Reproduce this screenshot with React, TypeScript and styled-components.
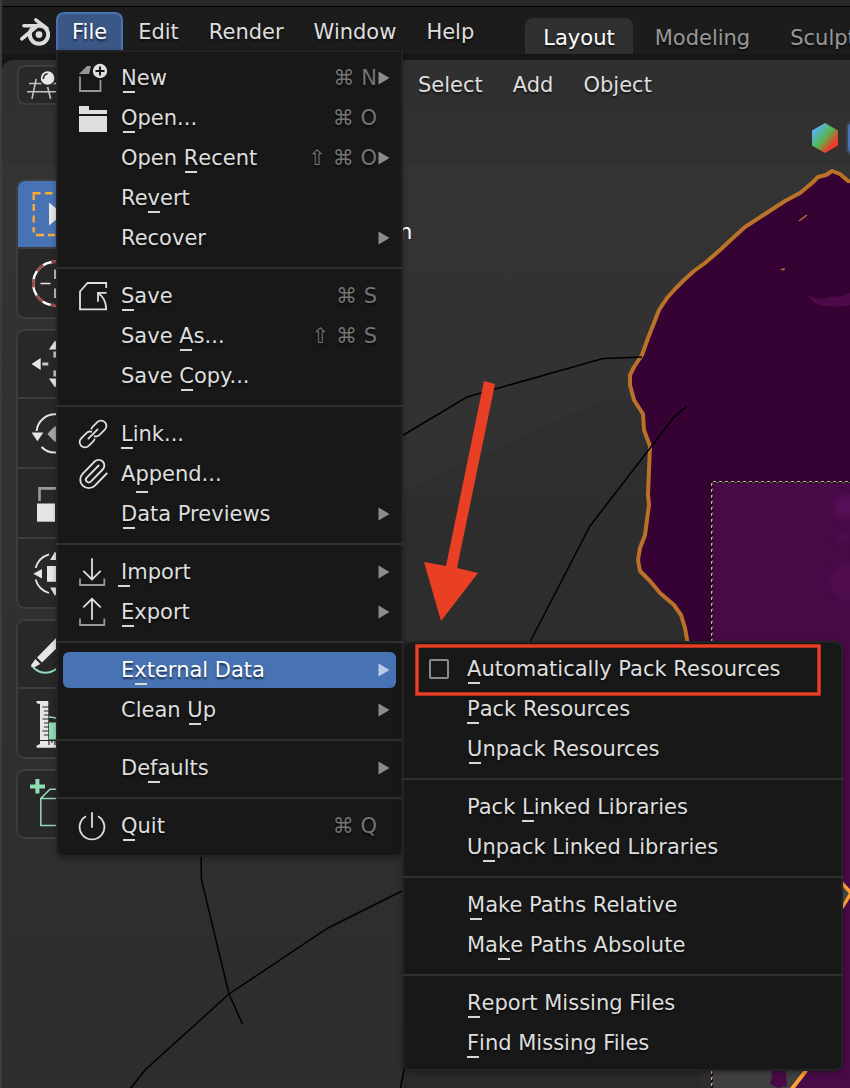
import React from "react";
import styled, { createGlobalStyle, css } from "styled-components";
import { Paperclip } from "lucide-react";

const GlobalStyle = createGlobalStyle`
  *, *::before, *::after { box-sizing: border-box; }
  body {
    margin: 0;
    background: #161616;
    color: #dedede;
    font: 21px/24px "DejaVu Sans", sans-serif;
    overflow-x: hidden;
  }
  button {
    font: inherit;
    color: inherit;
    background: none;
    border: 0;
    margin: 0;
    padding: 0;
    text-shadow: inherit;
  }
  ul { list-style: none; margin: 0; padding: 0; }
  svg { display: block; }
`;

/* ---------- window frame ---------- */

const AppFrame = styled.div`
  position: relative;
  display: flex;
  flex-direction: column;
  min-height: 100vh;
  overflow: hidden;
  border-left: 2px solid #3c3c3c;
  text-shadow: 0 2px 2px rgba(0, 0, 0, 0.6);
`;

const TitleStrip = styled.div`
  height: 7px;
  background: #282828;
  border-bottom: 1px solid #000;
`;

const TopBar = styled.header`
  display: flex;
  height: 47px;
  background: #1c1c1c;
`;

const LogoButton = styled.button`
  display: flex;
  align-items: flex-start;
  width: 54px;
  padding: 9px 0 0 16px;
  flex: none;
`;

const MenuBar = styled.nav`
  display: flex;
  padding-top: 5px;
  & > button {
    padding-top: 2px;
  }
`;

const MenuAnchor = styled.div`
  position: relative;
`;

const MenuTitle = styled.button<{ $open?: boolean }>`
  height: 38px;
  padding: 0 15px;
  border: 0 solid #4772b3;
  ${(p) =>
    p.$open &&
    css`
      padding: 0 14px;
      border-width: 2px 2px 0;
      border-radius: 8px 8px 0 0;
      background: #3b5786;
      color: #fff;
    `}
`;

const WorkspaceTabs = styled.nav`
  display: flex;
  align-items: flex-end;
  gap: 4px;
  margin-left: 36px;
`;

const WorkspaceTab = styled.button<{ $active?: boolean }>`
  height: 36px;
  padding: 4px 18px 0;
  border-radius: 8px 8px 0 0;
  background: ${(p) => (p.$active ? "#303030" : "transparent")};
  color: ${(p) => (p.$active ? "#fff" : "#989898")};
`;

/* ---------- 3D view ---------- */

const Viewport = styled.main`
  position: relative;
  flex: 1;
  margin-top: 6px;
  border-radius: 12px 0 0 0;
  overflow: hidden;
  background: linear-gradient(#343434, #2d2d2d);
`;

const SceneDrawing = styled.svg`
  position: absolute;
  inset: 0;
  width: 100%;
  height: 100%;
  text-shadow: none;
`;

const ViewHeader = styled.div`
  position: relative;
  display: grid;
  grid-template-columns: 386px 1fr;
  align-items: center;
  height: 50px;
  padding-left: 15px;
  background: #303030;
`;

const EditorTypeButton = styled.button`
  width: 66px;
  height: 40px;
  border: 2px solid #3d3d3d;
  border-radius: 8px;
  background: #282828;
`;

const ViewMenus = styled.nav`
  display: flex;
`;

const ToolHeader = styled.div`
  position: relative;
  display: flex;
  justify-content: flex-end;
  align-items: center;
  gap: 7px;
  height: 53px;
  padding-top: 2px;
  background: #313131;
`;

const ShadingButton = styled.button`
  width: 24px;
  height: 36px;
  margin-right: -20px;
  border: 2px solid #3d4656;
  border-radius: 8px;
  background: #4772b3;
`;

const ToolShelf = styled.aside`
  position: relative;
  display: flex;
  flex-direction: column;
  gap: 10px;
  width: 70px;
  margin: 16px 0 0 14px;
`;

const ToolGroup = styled.div`
  overflow: hidden;
  border: 2px solid #3d3d3d;
  border-radius: 9px;
  background: #282828;
`;

const ToolButton = styled.button<{ $active?: boolean }>`
  display: block;
  width: 100%;
  height: 70px;
  border-top: 2px solid #3d3d3d;
  background: ${(p) => (p.$active ? "#4772b3" : "#282828")};
  &:first-child {
    height: 66px;
    border-top: 0;
  }
`;

/* ---------- pop-up menus ---------- */

const MenuPanel = styled.ul<{ $sub?: boolean }>`
  position: absolute;
  z-index: 2;
  top: ${(p) => (p.$sub ? "-8px" : "38px")};
  left: ${(p) => (p.$sub ? "344px" : "0")};
  width: ${(p) => (p.$sub ? "441px" : "347px")};
  padding: 5px 0 ${(p) => (p.$sub ? "7px" : "10px")};
  border: 2px solid #232323;
  border-radius: ${(p) => (p.$sub ? "8px" : "0 0 8px 8px")};
  background: #181818;
  color: #dedede;
  box-shadow: 0 2px 5px rgba(0, 0, 0, 0.3);
`;

const MenuRow = styled.li`
  position: relative;
  padding: 3px 5px 1px;
`;

const MenuDivider = styled.li`
  height: 2px;
  margin: 10px -2px 6px;
  background: #303030;
`;

const rowFace = css<{ $active?: boolean }>`
  display: grid;
  grid-template-columns: 30px 1fr auto 12px;
  align-items: center;
  width: 100%;
  height: 36px;
  padding: 0 6px 0 15px;
  border-radius: 6px;
  text-align: left;
  white-space: nowrap;
  background: ${(p) => (p.$active ? "#4772b3" : "transparent")};
  color: ${(p) => (p.$active ? "#fff" : "inherit")};
`;

const RowButton = styled.button<{ $active?: boolean }>`
  ${rowFace}
`;

const RowCheck = styled.label<{ $active?: boolean }>`
  ${rowFace}
`;

const RowText = styled.span`
  padding-left: 13px;
`;

const Mnemonic = styled.span<{ $low?: boolean }>`
  position: relative;
  &::after {
    content: "";
    position: absolute;
    left: 50%;
    bottom: ${(p) => (p.$low ? "-7px" : "-3px")};
    width: 12px;
    height: 2px;
    margin-left: -6px;
    background: #d8d8d8;
  }
`;

const Shortcut = styled.span`
  padding-right: 1px;
  color: #747474;
`;

const CheckBox = styled.input`
  appearance: none;
  width: 20px;
  height: 20px;
  margin: 0 5px;
  border: 2px solid #8a8a8a;
  border-radius: 2px;
`;

const Annotation = styled.svg`
  position: absolute;
  z-index: 3;
  top: 0;
  left: 0;
  width: 100%;
  height: 100%;
  pointer-events: none;
`;

/* ---------- icons ---------- */

const BlenderLogo = () => (
  <svg width="32" height="32" viewBox="18 16 32 32" fill="none" stroke="#dcdcdc" strokeLinecap="round" strokeLinejoin="round">
    <circle cx="39" cy="34.6" r="9.2" strokeWidth="4" />
    <circle cx="39" cy="34.6" r="3.4" fill="#dcdcdc" stroke="none" />
    <path d="M35.8 19.8L47 28.4" strokeWidth="3.4" />
    <path d="M24 25.8H40" strokeWidth="3.6" />
    <path d="M21.8 38.8L36 27" strokeWidth="3.6" />
  </svg>
);

const MenuIcon = ({ name }: { name?: string }) => {
  const base = { width: 30, height: 32, viewBox: "0 0 30 32", fill: "none", stroke: "#dedede", strokeWidth: 1.8 };
  switch (name) {
    case "new":
      return (
        <svg {...base}>
          <path d="M2 14.5V29H22.5V18" stroke="#979797" />
          <path d="M1 12L9 4H13L11 12Z" fill="#979797" stroke="none" />
          <circle cx="22" cy="9" r="7.2" fill="#dedede" stroke="none" />
          <path d="M22 4.5V13.5M17.5 9H26.5" stroke="#181818" strokeWidth="2" />
        </svg>
      );
    case "open":
      return (
        <svg {...base}>
          <path d="M1 4H11V8H29V12H1ZM1 14H29V30H1Z" fill="#dedede" stroke="none" />
        </svg>
      );
    case "save":
      return (
        <svg {...base}>
          <path d="M28.2 8V3H9.5L2 11.5V29.3H28.2C28.2 22 26 17 20 13" />
          <path d="M28.6 12.8H20V21.8" />
        </svg>
      );
    case "link":
      return (
        <svg {...base}>
          <g transform="translate(15 16) rotate(-45)" strokeLinecap="round">
            <path d="M-6.5 0H6.5" />
            <path d="M2.6 -4.8Q3.6 -5.3 5 -5.3H11.4A5.3 5.3 0 0 1 11.4 5.3H4Q1 5.3 -0.4 2.8" />
            <path d="M-2.6 4.8Q-3.6 5.3 -5 5.3H-11.4A5.3 5.3 0 0 1 -11.4 -5.3H-4Q-1 -5.3 0.4 -2.8" />
          </g>
        </svg>
      );
    case "append":
      return <Paperclip size={34} strokeWidth={1.35} color="#dedede" style={{ marginLeft: -2 }} />;
    case "import":
      return (
        <svg {...base}>
          <path d="M2 22.5V29H26.3V22.5" stroke="#979797" />
          <path d="M14 2.3V22.5M5.3 14.8L14 23.4L22.7 14.8" />
        </svg>
      );
    case "export":
      return (
        <svg {...base}>
          <path d="M2 22.5V29H26.3V22.5" stroke="#979797" />
          <path d="M14 23.7V3.5M5.3 11.4L14 2.8L22.7 11.4" />
        </svg>
      );
    case "quit":
      return (
        <svg {...base}>
          <path d="M8 6.2A12.4 12.4 0 1 0 20 6.2M14 2.3V17.7" />
        </svg>
      );
    default:
      return <span />;
  }
};

const SubmenuArrow = ({ active }: { active?: boolean }) => (
  <svg width="12" height="14" viewBox="0 0 12 14">
    <path d="M0.5 0.5L11.5 7L0.5 13.5Z" fill={active ? "#b9cbe8" : "#8c8c8c"} />
  </svg>
);

const white = "#e6e6e6";
const mint = "#8fdcb4";

const toolDrawings: Record<string, React.ReactNode> = {
  "Select Box": (
    <>
      <path d="M15.7 19V12.2H22.5M27 12.2H34.5M39 12.2H46M15.7 23V30M15.7 34.5V41.5M15.7 46V51.5M18 54H26M30 54H37M41 54H48" stroke="#f9aa37" strokeWidth="2.4" />
      <path d="M31 21.5L45 33L31 44.5Z" fill={white} />
    </>
  ),
  Cursor: (
    <>
      <circle cx="37" cy="33.5" r="21.8" stroke="#fff" strokeWidth="2.4" />
      <circle cx="37" cy="33.5" r="21.8" stroke="#9c4444" strokeWidth="2.4" strokeDasharray="8.6 8.5" strokeDashoffset="4.3" />
      <path d="M22.5 33.5H32.5M37 19.5V29M37 38.5V48M42 33.5H52" stroke={white} strokeWidth="1.6" />
    </>
  ),
  Move: (
    <>
      <path d="M13.5 33L22.7 27V39ZM60.5 33L51.3 27V39ZM37 9.5L31 18.5H43ZM37 56.5L31 47.5H43Z" fill={white} />
      <path d="M24.3 33H30.3M43.7 33H49.7M37 20.5V26.5M37 39.5V45.5" stroke="#c8c8c8" strokeWidth="3.2" />
    </>
  ),
  Rotate: (
    <>
      <path d="M18.6 31A18.5 18.5 0 0 1 55.5 33.5M23.6 47A18.5 18.5 0 0 0 50 47" stroke={white} strokeWidth="2" />
      <path d="M13.6 32.4H25.4L19.4 41.3Z" fill={white} />
      <path d="M29.3 34L37 26L44.7 34L37 42Z" fill="#a6a6a6" />
    </>
  ),
  Scale: (
    <>
      <path d="M21.5 31V18.4H52V49H40" stroke="#9c9c9c" strokeWidth="2.6" />
      <path d="M19 33.5H37V51.7H19Z" fill={white} />
    </>
  ),
  Transform: (
    <>
      <path d="M17.6 28A20 20 0 0 1 31 14.4M17.6 39.5A20 20 0 0 0 31 53M56.4 28A20 20 0 0 0 43 14.4M56.4 39.5A20 20 0 0 1 43 53" stroke={white} strokeWidth="1.8" />
      <path d="M15.3 33.7L24 29V38.6ZM58.7 33.7L50 29V38.6ZM37 11.5L32.2 20H41.8ZM37 56L32.2 47.5H41.8ZM29 26H45V41.7H29Z" fill={white} />
    </>
  ),
  Annotate: (
    <>
      <path d="M15.2 46.6Q26.5 56.6 39 47.5" stroke={mint} strokeWidth="2" />
      <path d="M19 36.4L44 11L49.5 16.6L24 41.6ZM17.4 38L22.3 43L16 46.4Q12.6 47 13.2 44Z" fill={white} />
    </>
  ),
  Measure: (
    <>
      <path d="M31 32.5H38Q46 38 46 49.5H31Z" fill={mint} />
      <path d="M31 27Q42 26.5 51 40" stroke={mint} strokeWidth="1.6" />
      <path d="M18.6 11H30.3V50H58V57.7H18.6V55.5L22 54V14L18.6 13.2Z" fill={white} />
      <path d="M24.5 17H31M26 21H31M26 25H31M24.5 29H31M26 33H31M26 37H31M24.5 41H31M26 45H31M22 50.5H38M31 50V55M34 50V53M37 50V55" stroke="#222" strokeWidth="1.2" />
    </>
  ),
  "Add Cube": (
    <>
      <path d="M12 15.4H27M19.4 8V22.6" stroke={mint} strokeWidth="4" />
      <path d="M22.8 27.4L32 18.2H58M22.8 27.4H50V54.6H22.8Z" stroke={mint} strokeWidth="1.5" />
    </>
  ),
};

const toolGroups = [
  ["Select Box", "Cursor"],
  ["Move", "Rotate", "Scale", "Transform"],
  ["Annotate", "Measure"],
  ["Add Cube"],
];

const EditorTypeIcon = () => (
  <svg width="62" height="36" viewBox="19 67 62 36" fill="none" stroke="#c4c4c4" strokeWidth="1.6">
    <path d="M29 83.5H62M27 91.8H62M36.2 79L32 98.8M47.6 87L50.6 98.8" />
    <circle cx="47.6" cy="78" r="7.6" fill="#e8e8e8" stroke="#282828" />
    <path d="M43.4 79A4.6 4.6 0 0 1 47.6 73.8" stroke="#282828" />
  </svg>
);

const ColorHexagon = () => (
  <svg width="28" height="32" viewBox="0 0 28 32">
    <defs>
      <linearGradient id="spectrum" x1="0.1" y1="0.1" x2="0.9" y2="0.85">
        <stop offset="0.1" stopColor="#54b4e8" />
        <stop offset="0.5" stopColor="#58b64e" />
        <stop offset="0.85" stopColor="#ee3a26" />
      </linearGradient>
    </defs>
    <path d="M14 1L27 8.4V23.6L14 31L1 23.6V8.4Z" fill="url(#spectrum)" />
  </svg>
);

/* Mesh, camera frame and relationship lines of the 3D view. */
const Scene = () => (
  <SceneDrawing aria-hidden="true">
    <defs>
      <filter id="soft" x="-50%" y="-50%" width="200%" height="200%">
        <feGaussianBlur stdDeviation="4" />
      </filter>
    </defs>
    <g transform="translate(-2 -60)" fill="none">
      <path d="M403 492L600 401L640 398L700 398V1100H403Z" fill="#000" opacity="0.06" />
      <path d="M712 1060H860V1100H712Z" fill="#404040" />
      <path
        d="M862 184L856 182L848 181L840 174L832 171L826 175L818 177L812 183L800 193L785 201L765 214L745 227L735 236L720 250L705 263L694 271L684 280L676 288L667 298L659 310L654 323L648 338L642 355L634 367L630 375L630 385L634 400L643 414L644 430L650 446L649 470L648 495L649 505L647 520L645 535L640 548L638 560L640 571L650 581L660 593L674 605L681 615L685 628L688 645L700 700H862Z"
        fill="#350233"
        stroke="#b97228"
        strokeWidth="4"
        strokeLinejoin="round"
      />
      <path d="M799 221L807 215M781 269.5H784V268" stroke="#b97228" strokeWidth="1.4" />
      <path d="M808 296Q816 298 822 299L834 296L840 297L852 292V305Q826 309 815 303Z" fill="#4c0a4a" />
      <path d="M712 483H860V1060H712Z" fill="#480a46" />
      <g fill="#63126a" filter="url(#soft)" opacity="0.6">
        <circle cx="846" cy="507" r="11" />
        <circle cx="842" cy="537" r="5" opacity="0.7" />
        <circle cx="848" cy="582" r="18" opacity="0.5" />
      </g>
      <path d="M843 1060H860V1100H843Z" fill="#480a46" />
      <path d="M770 1060H785L787 1086L778 1088L770 1084L772 1076Z" fill="#480a46" />
      <path d="M812 1060L790 1090H860V1060Z" fill="#480a46" />
      <path d="M812 1060L805 1072L791 1090" stroke="#ff9f33" strokeWidth="4" />
      <path d="M843 884L852 893L843 907Z" fill="#484848" />
      <path d="M841 882L851 893L842 908" stroke="#ff9f33" strokeWidth="3.4" />
      <path d="M860 481.5H711.5V1100" stroke="#111" strokeWidth="1" />
      <path d="M860 481.5H711.5V1100" stroke="#e59aa4" strokeWidth="1" strokeDasharray="3 3" />
      <path d="M860 482.5H712.5V1100" stroke="#4e5e48" strokeWidth="1" />
      <path d="M860 482.5H712.5V1100" stroke="#111" strokeWidth="1" strokeDasharray="3 3" />
      <g stroke="#000" strokeWidth="1.5">
        <path d="M400 437L467 397L603 358.5L642 357" />
        <path d="M687 406L674 417L590 526L530 642" />
        <path d="M201 850L201.5 880L229 994L242.5 1024" />
        <path d="M410 887L328 928L229 994L145 1070L130 1089" />
        <path d="M405 1065L400 1090" />
      </g>
    </g>
    <text x="397" y="179" fontSize="21" fill="#fff">n</text>
  </SceneDrawing>
);

/* ---------- menu data ---------- */

type Entry = {
  /* "&" stands before the underlined access key */
  label: string;
  icon?: string;
  keys?: string;
  submenu?: boolean;
  low?: boolean;
  active?: boolean;
  check?: boolean;
};

const fileMenu: Entry[][] = [
  [
    { label: "&New", icon: "new", keys: "⌘ N", submenu: true },
    { label: "&Open...", icon: "open", keys: "⌘ O" },
    { label: "Open &Recent", keys: "⇧ ⌘ O", submenu: true },
    { label: "Re&vert" },
    { label: "Recover", submenu: true },
  ],
  [
    { label: "&Save", icon: "save", keys: "⌘ S" },
    { label: "Save &As...", keys: "⇧ ⌘ S" },
    { label: "Save &Copy..." },
  ],
  [
    { label: "&Link...", icon: "link" },
    { label: "A&ppend...", icon: "append", low: true },
    { label: "&Data Previews", submenu: true },
  ],
  [
    { label: "&Import", icon: "import", submenu: true },
    { label: "&Export", icon: "export", submenu: true },
  ],
  [
    { label: "E&xternal Data", submenu: true, active: true },
    { label: "Clean &Up", submenu: true },
  ],
  [{ label: "De&faults", submenu: true }],
  [{ label: "&Quit", icon: "quit", keys: "⌘ Q" }],
];

const externalDataMenu: Entry[][] = [
  [
    { label: "&Automatically Pack Resources", check: true },
    { label: "&Pack Resources" },
    { label: "&Unpack Resources" },
  ],
  [{ label: "Pack &Linked Libraries" }, { label: "U&npack Linked Libraries" }],
  [{ label: "&Make Paths Relative" }, { label: "Ma&ke Paths Absolute" }],
  [{ label: "&Report Missing Files" }, { label: "&Find Missing Files" }],
];

const EntryLabel = ({ label, low }: { label: string; low?: boolean }) => {
  const at = label.indexOf("&");
  if (at < 0) return <RowText>{label}</RowText>;
  return (
    <RowText>
      {label.slice(0, at)}
      <Mnemonic $low={low}>{label[at + 1]}</Mnemonic>
      {label.slice(at + 2)}
    </RowText>
  );
};

const Menu = ({ groups, sub }: { groups: Entry[][]; sub?: boolean }) => (
  <MenuPanel $sub={sub}>
    {groups.map((group, g) => (
      <React.Fragment key={g}>
        {g > 0 && <MenuDivider role="separator" />}
        {group.map((entry) => (
          <MenuRow key={entry.label}>
            {entry.check ? (
              <RowCheck>
                <CheckBox type="checkbox" />
                <EntryLabel label={entry.label} />
              </RowCheck>
            ) : (
              <RowButton type="button" $active={entry.active}>
                <MenuIcon name={entry.icon} />
                <EntryLabel label={entry.label} low={entry.low} />
                <Shortcut>{entry.keys}</Shortcut>
                {entry.submenu && <SubmenuArrow active={entry.active} />}
              </RowButton>
            )}
            {entry.active && <Menu groups={externalDataMenu} sub />}
          </MenuRow>
        ))}
      </React.Fragment>
    ))}
  </MenuPanel>
);

export default function App() {
  return (
    <>
      <GlobalStyle />
      <AppFrame>
        <TitleStrip />
        <TopBar>
          <LogoButton type="button" aria-label="Blender">
            <BlenderLogo />
          </LogoButton>
          <MenuBar>
            <MenuAnchor>
              <MenuTitle type="button" $open>File</MenuTitle>
              <Menu groups={fileMenu} />
            </MenuAnchor>
            {["Edit", "Render", "Window", "Help"].map((title) => (
              <MenuTitle type="button" key={title}>{title}</MenuTitle>
            ))}
          </MenuBar>
          <WorkspaceTabs>
            <WorkspaceTab type="button" $active>Layout</WorkspaceTab>
            <WorkspaceTab type="button">Modeling</WorkspaceTab>
            <WorkspaceTab type="button">Sculpting</WorkspaceTab>
          </WorkspaceTabs>
        </TopBar>
        <Viewport>
          <Scene />
          <ViewHeader>
            <EditorTypeButton type="button" aria-label="Editor type">
              <EditorTypeIcon />
            </EditorTypeButton>
            <ViewMenus>
              <MenuTitle type="button">Select</MenuTitle>
              <MenuTitle type="button">Add</MenuTitle>
              <MenuTitle type="button">Object</MenuTitle>
            </ViewMenus>
          </ViewHeader>
          <ToolHeader>
            <ColorHexagon />
            <ShadingButton type="button" aria-label="Shading" />
          </ToolHeader>
          <ToolShelf>
            {toolGroups.map((group) => (
              <ToolGroup key={group[0]}>
                {group.map((tool) => (
                  <ToolButton type="button" key={tool} aria-label={tool} $active={tool === "Select Box"}>
                    <svg width="66" height="66" viewBox="0 0 66 66" fill="none">
                      {toolDrawings[tool]}
                    </svg>
                  </ToolButton>
                ))}
              </ToolGroup>
            ))}
          </ToolShelf>
        </Viewport>
        <Annotation aria-hidden="true">
          <g transform="translate(-2 0)">
            <path d="M484 381L495 384L457 568L478 573L441 621L424 562L446 566Z" fill="#e94025" />
            <rect x="417" y="646" width="402" height="48" fill="none" stroke="#7a2015" strokeWidth="4" />
            <rect x="417" y="646" width="402" height="48" fill="none" stroke="#e94025" strokeWidth="3" />
          </g>
        </Annotation>
      </AppFrame>
    </>
  );
}
